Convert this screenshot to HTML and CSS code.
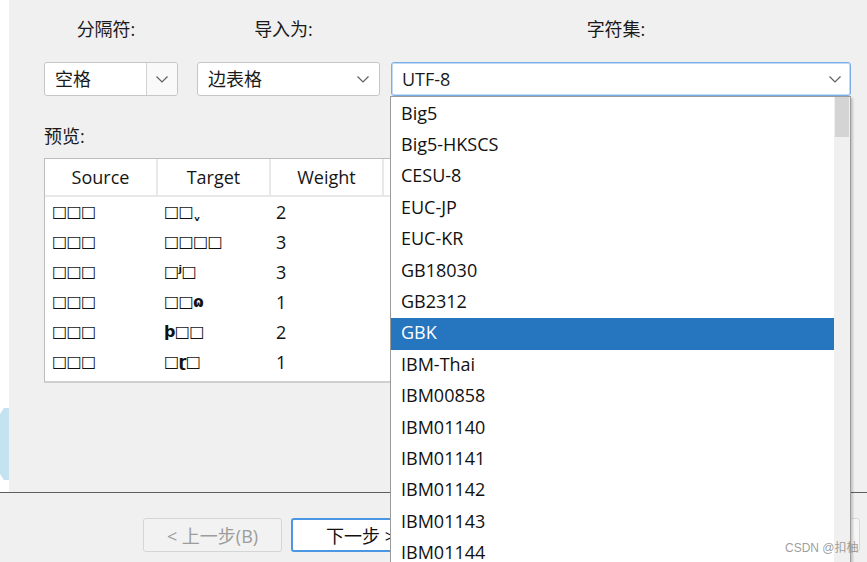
FILE: index.html
```html
<!DOCTYPE html>
<html lang="zh-CN">
<head>
<meta charset="utf-8">
<title>导入向导</title>
<link rel="stylesheet" href="styles.css">
</head>
<body>
<div class="window">
  <div class="main">
    <div class="side">
      <svg class="side-shape" width="9" height="72" viewBox="0 0 9 72"><polygon points="4,0 9,0 9,72 4,72 0,66 0,6" fill="#c3e3f0"/></svg>
    </div>
    <div class="content">
      <div class="fields">
        <div class="field f1">
          <div class="label">分隔符:</div>
          <div class="combo split">
            <span class="combo-text">空格</span>
            <span class="combo-btn"><svg width="12" height="7" viewBox="0 0 12 7"><polyline points="0.5,0.5 6,6 11.5,0.5" fill="none" stroke="#5f5f5f" stroke-width="1.2"/></svg></span>
          </div>
        </div>
        <div class="field f2">
          <div class="label">导入为:</div>
          <div class="combo">
            <span class="combo-text">边表格</span>
            <svg class="chev" width="12" height="7" viewBox="0 0 12 7"><polyline points="0.5,0.5 6,6 11.5,0.5" fill="none" stroke="#5f5f5f" stroke-width="1.2"/></svg>
          </div>
        </div>
        <div class="field f3">
          <div class="label">字符集:</div>
          <div class="combo focused">
            <span class="combo-text">UTF-8</span>
            <svg class="chev" width="12" height="7" viewBox="0 0 12 7"><polyline points="0.5,0.5 6,6 11.5,0.5" fill="none" stroke="#5f5f5f" stroke-width="1.2"/></svg>
          </div>
        </div>
      </div>
      <div class="preview-label">预览:</div>
      <div class="table">
        <div class="thead">
          <div class="th">Source</div>
          <div class="th">Target</div>
          <div class="th">Weight</div>
          <div class="th"></div>
        </div>
        <div class="tbody">
          <div class="tr"><div class="td g">□□□</div><div class="td g">□□ˬ</div><div class="td">2</div></div>
          <div class="tr"><div class="td g">□□□</div><div class="td g">□□□□</div><div class="td">3</div></div>
          <div class="tr"><div class="td g">□□□</div><div class="td g">□ʲ□</div><div class="td">3</div></div>
          <div class="tr"><div class="td g">□□□</div><div class="td g">□□ɷ</div><div class="td">1</div></div>
          <div class="tr"><div class="td g">□□□</div><div class="td g">þ□□</div><div class="td">2</div></div>
          <div class="tr"><div class="td g">□□□</div><div class="td g">□ɽ□</div><div class="td">1</div></div>
        </div>
      </div>
    </div>
  </div>
  <div class="footer">
    <button class="btn disabled">&lt; 上一步(B)</button>
    <button class="btn default">下一步 &gt;</button>
    <button class="btn finish">完成(F)</button>
  </div>

  <div class="dropdown">
    <div class="list">
      <div class="item">Big5</div>
      <div class="item">Big5-HKSCS</div>
      <div class="item">CESU-8</div>
      <div class="item">EUC-JP</div>
      <div class="item">EUC-KR</div>
      <div class="item">GB18030</div>
      <div class="item">GB2312</div>
      <div class="item selected">GBK</div>
      <div class="item">IBM-Thai</div>
      <div class="item">IBM00858</div>
      <div class="item">IBM01140</div>
      <div class="item">IBM01141</div>
      <div class="item">IBM01142</div>
      <div class="item">IBM01143</div>
      <div class="item">IBM01144</div>
    </div>
    <div class="scrollbar"><div class="thumb"></div></div>
  </div>
  <div class="watermark">CSDN @扣柚</div>
</div>
</body>
</html>
```

FILE: styles.css
```css
* { box-sizing: border-box; }

html, body {
  margin: 0;
  padding: 0;
}

body {
  width: 867px;
  height: 562px;
  overflow: hidden;
  background: #f0f0f0;
  font-family: "Open Sans", "Noto Sans CJK SC", sans-serif;
  font-size: 18px;
  color: #1a1a1a;
}

.window {
  position: relative;
  width: 867px;
  height: 562px;
  overflow: hidden;
  display: flex;
  flex-direction: column;
}

.main {
  display: flex;
  height: 492px;
  flex: none;
}

.side {
  width: 9px;
  background: #ffffff;
  padding-top: 408px;
  flex: none;
}

.side-shape { display: block; }

.content {
  flex: 1;
  padding: 17px 0 0 35px;
  display: flex;
  flex-direction: column;
}

.fields {
  display: flex;
  align-items: flex-start;
}

.field {
  display: flex;
  flex-direction: column;
  align-items: center;
  gap: 21px;
}

.f1 { width: 134px; }
.f2 { width: 183px; margin-left: 19px; }
.f3 { width: 460px; margin-left: 11px; }

.label {
  height: 24px;
  line-height: 24px;
  padding-right: 10px;
  white-space: nowrap;
}

.combo {
  width: 100%;
  height: 34px;
  background: #ffffff;
  border: 1px solid #c6c6c6;
  border-radius: 3px;
  display: flex;
  align-items: center;
  justify-content: space-between;
  padding: 0 10px 0 10px;
}

.combo-text {
  line-height: 24px;
  white-space: nowrap;
}

.combo.split {
  padding-right: 0;
  overflow: hidden;
}

.combo-btn {
  width: 31px;
  height: 100%;
  background: #f9f9f9;
  border-left: 1px solid #d2d2d2;
  display: flex;
  align-items: center;
  justify-content: center;
}

.combo-btn svg, .chev { display: block; }

.combo.focused {
  border-color: #79ade6;
  box-shadow: inset 0 0 0 1px rgba(121, 173, 230, 0.45);
  padding-right: 9px;
}

.preview-label {
  margin-top: 28px;
  height: 24px;
  line-height: 24px;
}

.table {
  margin-top: 10px;
  width: 440px;
  height: 225px;
  background: #ffffff;
  border: 1px solid #bdbdbd;
  border-bottom: 2px solid #cfcfcf;
}

.thead {
  display: flex;
  height: 38px;
  border-bottom: 2px solid #e8e8e8;
}

.th {
  width: 113px;
  flex: none;
  text-align: center;
  line-height: 36px;
  color: #151515;
  border-right: 2px solid #e8e8e8;
}

.th:last-child { flex: 1; border-right: none; }

.tr {
  display: flex;
  height: 30px;
  align-items: center;
}

.td {
  width: 113px;
  flex: none;
  padding-left: 6px;
  color: #111;
  line-height: 30px;
}

.td.g {
  font-family: "DejaVu Sans", sans-serif;
  font-size: 16px;
  font-weight: bold;
  padding-left: 7px;
  letter-spacing: -0.6px;
}

.td:nth-child(2) { padding-left: 6px; }
.td:nth-child(3) { padding-left: 5px; }

.footer {
  flex: 1;
  border-top: 1px solid #5e5e5e;
  display: flex;
  align-items: flex-start;
  padding: 25px 0 0 143px;
  gap: 9px;
}

.btn {
  width: 139px;
  height: 34px;
  font-family: "Open Sans", "Noto Sans CJK SC", sans-serif;
  font-size: 18px;
  border-radius: 3px;
  background: #f5f5f5;
  border: 1px solid #d0d0d0;
  color: #111;
  padding: 0;
}

.btn.disabled {
  color: #9c9c9c;
  background: #f2f2f2;
  border-color: #d5d5d5;
}

.btn.default {
  background: #ffffff;
  border: 2px solid #4c97e4;
}

.btn.finish {
  margin-left: auto;
  margin-right: 7px;
  border-color: #d8d8d8;
}

.dropdown {
  position: absolute;
  left: 390px;
  top: 96px;
  width: 461px;
  height: 480px;
  background: #ffffff;
  border: 1px solid #9b9b9b;
  box-shadow: 2px 2px 2px rgba(0, 0, 0, 0.18);
  display: flex;
}

.list {
  flex: 1;
  padding-top: 1.5px;
}

.item {
  height: 31.4px;
  display: flex;
  align-items: center;
  padding-left: 10px;
  padding-bottom: 3px;
  color: #111;
  white-space: nowrap;
}

.item.selected {
  background: #2675bf;
  color: #ffffff;
}

.scrollbar {
  width: 16px;
  background: #f0f0f0;
  flex: none;
}

.thumb {
  height: 40px;
  background: #d4d4d4;
  margin: 0 1px;
}

.watermark {
  position: absolute;
  left: 785px;
  top: 538px;
  font-family: "Liberation Sans", "Noto Sans CJK SC", sans-serif;
  font-size: 12px;
  color: rgba(140, 140, 140, 0.85);
  white-space: nowrap;
}
```
